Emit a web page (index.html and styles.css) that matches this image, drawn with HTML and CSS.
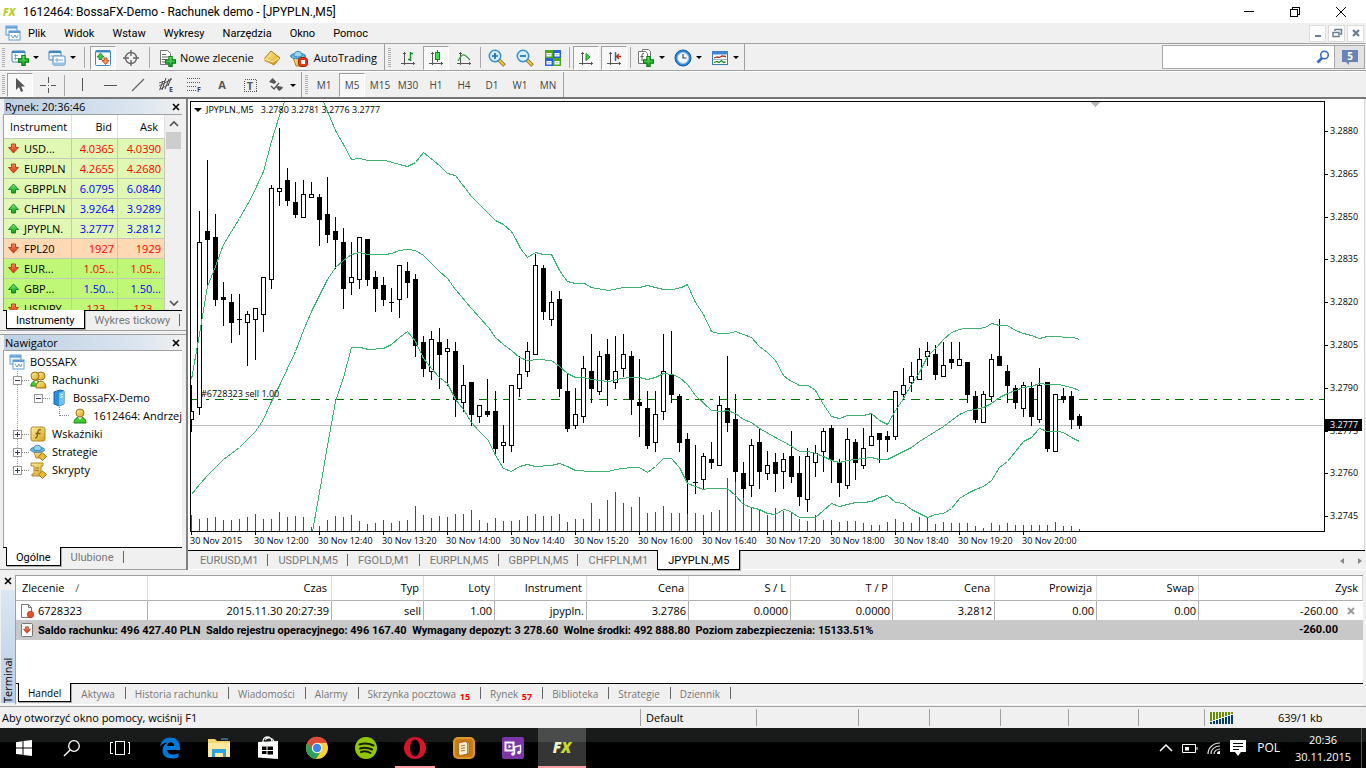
FILE: index.html
```html
<!DOCTYPE html>
<html lang="pl">
<head>
<meta charset="utf-8">
<title>1612464: BossaFX-Demo - Rachunek demo - [JPYPLN.,M5]</title>
<link rel="stylesheet" href="styles.css">
</head>
<body>
<svg class="defs" aria-hidden="true">
  <defs>
    <linearGradient id="gGreen" x1="0" y1="0" x2="0" y2="1"><stop offset="0" stop-color="#6df06d"/><stop offset="1" stop-color="#0b9a1e"/></linearGradient>
    <linearGradient id="gGold" x1="0" y1="0" x2="1" y2="1"><stop offset="0" stop-color="#fff0a0"/><stop offset="1" stop-color="#d9a31c"/></linearGradient>
    <linearGradient id="gRed" x1="0" y1="0" x2="0" y2="1"><stop offset="0" stop-color="#ff8a5c"/><stop offset="1" stop-color="#d03010"/></linearGradient>
    <symbol id="plus" viewBox="0 0 10 10"><path d="M3.500.5h3v3h3v3h-3v3h-3v-3h-3v-3h3z" fill="url(#gGreen)" stroke="#0a7d18"/></symbol>
    <symbol id="down" viewBox="0 0 11 11"><path d="M3.500 1h4v3.500h3L5.500 10 .5 4.500h3z" fill="url(#gRed)" stroke="#a83a1c" stroke-width=".9"/></symbol>
    <symbol id="up" viewBox="0 0 11 11"><path d="M3.500 10h4V6.500h3L5.500 1 .5 6.500h3z" fill="url(#gGreen)" stroke="#167a2a" stroke-width=".9"/></symbol>
    <symbol id="charts" viewBox="0 0 16 16"><rect x="1" y="1" width="11" height="9" fill="#eaf5ff" stroke="#5e9bd8"/><path d="M1 2.500h11" stroke="#5e9bd8" stroke-width="2"/><rect x="4" y="6" width="11" height="9" fill="#fff" stroke="#5e9bd8"/><path d="M4 7h11" stroke="#5e9bd8" stroke-width="2"/><path d="M6 10l2 3 2-3 1.500 3L13 10" fill="none" stroke="#5e9bd8"/></symbol>
    <symbol id="axes" viewBox="0 0 16 16"><path d="M4.500 2v13M1 13.500h14M3 3.500h3M13.500 12v3" fill="none" stroke="#555"/></symbol>
    <symbol id="hat" viewBox="0 0 18 18"><ellipse cx="8.500" cy="7.500" rx="8" ry="3" fill="#69b9de" stroke="#347fae"/><path d="M4 7c0-6 9-6 9 0-2 2-7 2-9 0z" fill="#94d5f0" stroke="#347fae"/></symbol>
    <symbol id="person" viewBox="0 0 16 16"><path d="M2 15c0-8 12-8 12 0z" fill="#42cc2c" stroke="#138018"/><path d="M6 9l2 3 2-3z" fill="#fff"/><circle cx="8" cy="5" r="4" fill="url(#gGold)" stroke="#9a7418"/></symbol>
  </defs>
</svg>

<div class="app">
  <header class="titlebar">
    <svg class="ico-title" viewBox="0 0 18 12"><text x="1" y="10" class="fx-small">FX</text></svg>
    <span class="title-text">1612464: BossaFX-Demo - Rachunek demo - [JPYPLN.,M5]</span>
    <div class="window-buttons">
      <button aria-label="Minimalizuj"><svg viewBox="0 0 12 12"><path d="M1 5.500h10" stroke="#000" shape-rendering="crispEdges"/></svg></button>
      <button aria-label="Przywróć"><svg viewBox="0 0 12 12"><path d="M1.500 3.500h7v7h-7zM3.500 3V1.500h7v7H9" fill="none" stroke="#000" shape-rendering="crispEdges"/></svg></button>
      <button aria-label="Zamknij"><svg viewBox="0 0 12 12"><path d="M1 1l10 10M11 1L1 11" stroke="#000"/></svg></button>
    </div>
  </header>

  <nav class="menubar">
    <svg class="ico16"><use href="#charts"/></svg>
    <button>Plik</button><button>Widok</button><button>Wstaw</button><button>Wykresy</button><button>Narzędzia</button><button>Okno</button><button>Pomoc</button>
    <div class="mdi-buttons">
      <button aria-label="Minimalizuj wykres"><svg viewBox="0 0 12 12"><path d="M3 9h6" stroke="#6b7f92" stroke-width="2"/></svg></button>
      <button aria-label="Przywróć wykres"><svg viewBox="0 0 12 12"><path d="M2 5.500h6v4H2zM4 4V2.500h6.500V7H9" fill="none" stroke="#6b7f92" stroke-width="1.500"/></svg></button>
      <button aria-label="Zamknij wykres"><svg viewBox="0 0 12 12"><path d="M3 3l6 6M9 3L3 9" stroke="#6b7f92" stroke-width="2.200"/></svg></button>
    </div>
  </nav>

  <div class="toolrow">
    <div class="toolbar">
      <i class="grip"></i>
      <button class="tool drop" aria-label="Nowy wykres"><svg class="ico18" viewBox="0 0 18 18"><rect x="1" y="2" width="13" height="11" rx="1" fill="#fff" stroke="#3f86c4"/><path d="M1 3h13" stroke="#3f86c4" stroke-width="2"/><path d="M4.500 5v6M3 6.500h4M3 9.500h8" stroke="#7aa7cf"/><use href="#plus" x="7" y="6" width="11" height="11"/></svg><i class="caret"></i></button>
      <button class="tool drop" aria-label="Profile"><svg class="ico18" viewBox="0 0 18 18"><rect x="1" y="2" width="12" height="9" rx="1" fill="#eaf5ff" stroke="#3f86c4"/><path d="M1 3h12" stroke="#3f86c4" stroke-width="2"/><path d="M3 7h8" stroke="#7aa7cf"/><rect x="5" y="7" width="12" height="9" rx="1" fill="#fff" stroke="#3f86c4"/><path d="M5 14.500h12" stroke="#8fc3ee" stroke-width="2"/><path d="M7 11h8M9 9v4" stroke="#7aa7cf"/></svg><i class="caret"></i></button>
      <i class="sep wide"></i>
      <button class="tool pressed" aria-label="Rynek"><svg class="ico18" viewBox="0 0 18 18"><rect x="1.500" y="1.500" width="15" height="15" rx="1" fill="#fff" stroke="#3f86c4"/><path d="M2 2.500h14" stroke="#3f86c4" stroke-width="2"/><path d="M6.500 4l3.500 4h-2v2.500H5V8H3z" fill="#3ccc3c" stroke="#117d20" stroke-width=".8"/><path d="M11.500 15.500l3.500-4h-2V9h-3v2.500H8z" fill="#ff9060" stroke="#b9320c" stroke-width=".8"/></svg></button>
      <button class="tool" aria-label="Kursor danych"><svg class="ico18" viewBox="0 0 18 18"><circle cx="9" cy="9" r="5.500" fill="none" stroke="#666" stroke-width="1.400"/><path d="M9 1v6M9 11v6M1 9h6M11 9h6" stroke="#666" stroke-width="1.400"/></svg></button>
      <i class="sep wide"></i>
      <button class="tool text order"><svg class="ico18" viewBox="0 0 18 18"><path d="M2.500 1.500h7l3 3v11h-10z" fill="#fff" stroke="#777"/><path d="M4 5.500h4M4 8h6M4 10.500h5M4 13h4" stroke="#666"/><use href="#plus" x="7" y="7" width="11" height="11"/></svg>Nowe zlecenie</button>
      <button class="tool" aria-label="MetaEditor"><svg class="ico18" viewBox="0 0 18 18"><path d="M1 10L8 2l9 7-6 7z" fill="url(#gGold)" stroke="#a8761a"/><path d="M1 10l9 3 7-4-6 7L1.500 12z" fill="#d79b25"/><path d="M1 10l9 3 6-4" fill="none" stroke="#fff3b8"/></svg></button>
      <button class="tool text auto"><svg class="ico18" viewBox="0 0 18 18"><path d="M3 8h12l-3 9H6z" fill="url(#gGold)" stroke="#b6851c"/><use href="#hat" x="0" y="0" width="17" height="17"/><rect x="8.500" y="8.500" width="9" height="9" rx="3" fill="#e03c20" stroke="#a01c0c"/><rect x="11" y="11" width="4" height="4" fill="#fff"/></svg>AutoTrading</button>
    </div>
    <div class="toolbar charting">
      <i class="grip"></i>
      <button class="tool" aria-label="Słupki"><svg class="ico16" viewBox="0 0 16 16"><use href="#axes"/><path d="M10.500 2v9M10.500 3.500H13M8 9.500h2" stroke="#178a25" stroke-width="1.400"/></svg></button>
      <button class="tool pressed" aria-label="Świece"><svg class="ico16" viewBox="0 0 16 16"><use href="#axes"/><path d="M9.500 0v12" stroke="#178a25"/><rect x="7.500" y="2.500" width="4" height="7" fill="#42dc50" stroke="#178a25"/></svg></button>
      <button class="tool" aria-label="Linia"><svg class="ico16" viewBox="0 0 16 16"><use href="#axes"/><path d="M2 11c4-8 6-8 12-1" fill="none" stroke="#3b9f47" stroke-width="1.300"/></svg></button>
      <i class="sep"></i>
      <button class="tool" aria-label="Powiększ"><svg class="ico18" viewBox="0 0 18 18"><path d="M11 11l5.500 5.500" stroke="#8d6b14" stroke-width="3.600"/><path d="M11 11l5 5" stroke="#f1c93c" stroke-width="2"/><circle cx="7" cy="7" r="5.700" fill="#d5efff" stroke="#3a8fca" stroke-width="1.500"/><path d="M4 7h6M7 4v6" stroke="#1a73ae" stroke-width="1.700"/></svg></button>
      <button class="tool" aria-label="Pomniejsz"><svg class="ico18" viewBox="0 0 18 18"><path d="M11 11l5.500 5.500" stroke="#8d6b14" stroke-width="3.600"/><path d="M11 11l5 5" stroke="#f1c93c" stroke-width="2"/><circle cx="7" cy="7" r="5.700" fill="#d5efff" stroke="#3a8fca" stroke-width="1.500"/><path d="M4 7h6" stroke="#1a73ae" stroke-width="1.700"/></svg></button>
      <button class="tool" aria-label="Okna sąsiadująco"><svg class="ico18" viewBox="0 0 18 18"><path d="M1 1h8v8H1zM9 9h8v8H9z" fill="#4ea51e"/><path d="M9 1h8v8H9zM1 9h8v8H1z" fill="#2864d4"/><path d="M2.500 4h5v3.500h-5zM10.500 4h5v3.500h-5zM2.500 12h5v3.500h-5zM10.500 12h5v3.500h-5z" fill="#fff"/><path d="M3.500 5.700h3M11.500 5.700h3M3.500 13.700h3M11.500 13.700h3" stroke="#9bbcdc"/></svg></button>
      <i class="sep"></i>
      <button class="tool pressed" aria-label="Auto przewijanie"><svg class="ico16" viewBox="0 0 16 16"><use href="#axes"/><path d="M8 3.500v7l4-3.500z" fill="#42dc50" stroke="#178a25"/></svg></button>
      <button class="tool pressed" aria-label="Przesunięcie wykresu"><svg class="ico16" viewBox="0 0 16 16"><use href="#axes"/><path d="M9.500 2v9" stroke="#246ca8" stroke-width="1.500"/><path d="M15 6.500h-4M13 4l-2.500 2.500L13 9" fill="none" stroke="#b5340f" stroke-width="1.400"/></svg></button>
      <i class="sep"></i>
      <button class="tool drop" aria-label="Wskaźniki"><svg class="ico18" viewBox="0 0 18 18"><path d="M5.500.5h6l2 2v10h-8z" fill="#f8f8f8" stroke="#777"/><path d="M1.500 2.500h7l2 2v10h-9z" fill="#fff" stroke="#777"/><path d="M7 4.500c-2-.5-2 1-2 2V12M3.500 7.500h3" fill="none" stroke="#555"/><use href="#plus" x="6" y="7" width="11" height="11"/></svg><i class="caret"></i></button>
      <button class="tool drop" aria-label="Okresy"><svg class="ico18" viewBox="0 0 18 18"><circle cx="9" cy="9" r="8" fill="#2b8ae0" stroke="#155aa0"/><circle cx="9" cy="9" r="5.500" fill="#f3f9ff" stroke="#9bc5ec"/><path d="M9 5v4h3.500" fill="none" stroke="#444" stroke-width="1.200"/></svg><i class="caret"></i></button>
      <button class="tool drop" aria-label="Szablony"><svg class="ico18" viewBox="0 0 18 18"><rect x="1.500" y="2.500" width="15" height="13" fill="#fff" stroke="#3f78b4"/><path d="M1 4h16" stroke="#3f86d4" stroke-width="3"/><path d="M3 9l3-1 2 .5L11 7l4 .5" fill="none" stroke="#a83a1c" stroke-width="1.300"/><path d="M2 10.500h14" stroke="#9bbcdc"/><path d="M3 13.500l3-1 2 1 2.500-2 2 2 2-.500" fill="none" stroke="#178a25" stroke-width="1.300"/></svg><i class="caret"></i></button>
    </div>
    <form class="search">
      <input type="text" aria-label="Szukaj">
      <svg class="ico14" viewBox="0 0 14 14"><path d="M6 8l-4.500 4.500" stroke="#3567c8" stroke-width="2.600"/><circle cx="8.500" cy="5" r="3.800" fill="#fff" stroke="#3567c8" stroke-width="1.500"/></svg>
      <button type="button" aria-label="Wiadomości: 5"><svg viewBox="0 0 18 18"><path d="M1 2h16v12H8v3l-3-3H1z" fill="#6b82b4"/><text x="9" y="12" text-anchor="middle" class="chat-num">5</text></svg></button>
    </form>
  </div>

  <div class="toolrow lower">
    <div class="toolbar">
      <i class="grip"></i>
      <button class="tool pressed" aria-label="Kursor"><svg class="ico16" viewBox="0 0 16 16"><path d="M4 1v12l3-3 2 5 2.200-1-2-4.500H13z" fill="#555"/></svg></button>
      <button class="tool" aria-label="Celownik"><svg class="ico16" viewBox="0 0 16 16"><path d="M8.500 0v6M8.500 11v5M0 8.500h6M11 8.500h5M8 8.500h1" stroke="#555" shape-rendering="crispEdges"/></svg></button>
      <i class="sep"></i>
      <button class="tool" aria-label="Linia pionowa"><svg class="ico16" viewBox="0 0 16 16"><path d="M8.500 1v13" stroke="#555" shape-rendering="crispEdges"/></svg></button>
      <button class="tool" aria-label="Linia pozioma"><svg class="ico16" viewBox="0 0 16 16"><path d="M2 8.500h13" stroke="#555" shape-rendering="crispEdges"/></svg></button>
      <button class="tool" aria-label="Linia trendu"><svg class="ico16" viewBox="0 0 16 16"><path d="M2 14L14 2" stroke="#666" stroke-width="1.200"/></svg></button>
      <button class="tool" aria-label="Kanał"><svg class="ico16" viewBox="0 0 16 16"><path d="M1 9L14 2M1 13L11 7M1 6l6-2" stroke="#666"/><path d="M4 13L8 1M7 12l4-10M2 12l3-8M10 9l3-8" stroke="#444"/><text x="11" y="15" class="glyph-sub">E</text></svg></button>
      <button class="tool" aria-label="Fibonacci"><svg class="ico16" viewBox="0 0 16 16"><path d="M1 1.500h14M1 5.500h14M1 9.500h9M1 13.500h9" stroke="#555" stroke-dasharray="1 1"/><text x="11" y="15" class="glyph-sub">F</text></svg></button>
      <button class="tool glyph">A</button>
      <button class="tool" aria-label="Etykieta"><svg class="ico16" viewBox="0 0 16 16"><path d="M2.500 2.500h12v12h-12z" fill="none" stroke="#555" stroke-dasharray="1 1" shape-rendering="crispEdges"/><text x="8" y="13" text-anchor="middle" class="glyph-t">T</text></svg></button>
      <button class="tool drop narrow" aria-label="Strzałki"><svg class="ico16" viewBox="0 0 16 16"><path d="M4.500 1l4 4-2.500 2-2-1-3-1zM11 14l-3-4 2-1 5 1-1 2z" fill="#555"/><path d="M3 9l3 3 5-6" fill="none" stroke="#555" stroke-width="1.300"/></svg><i class="caret"></i></button>
    </div>
    <div class="toolbar periods">
      <i class="grip"></i>
      <button class="tool">M1</button><button class="tool pressed">M5</button><button class="tool">M15</button><button class="tool">M30</button><button class="tool">H1</button><button class="tool">H4</button><button class="tool">D1</button><button class="tool">W1</button><button class="tool">MN</button>
    </div>
  </div>

  <main class="workspace">
    <aside class="side">
      <section class="panel market">
        <div class="panel-title"><span>Rynek: 20:36:46</span><button aria-label="Zamknij Rynek"><svg viewBox="0 0 8 8"><path d="M1 1l6 6M7 1L1 7" stroke="#000" stroke-width="1.600"/></svg></button></div>
        <div class="quotes">
          <div class="quote-clip">
          <table>
            <colgroup><col class="q-name"><col class="q-bid"><col></colgroup>
            <thead><tr><th>Instrument</th><th>Bid</th><th>Ask</th></tr></thead>
            <tbody>
              <tr class="dn"><td><svg><use href="#down"/></svg>USD...</td><td>4.0365</td><td>4.0390</td></tr>
              <tr class="dn"><td><svg><use href="#down"/></svg>EURPLN</td><td>4.2655</td><td>4.2680</td></tr>
              <tr class="upw"><td><svg><use href="#up"/></svg>GBPPLN</td><td>6.0795</td><td>6.0840</td></tr>
              <tr class="upw"><td><svg><use href="#up"/></svg>CHFPLN</td><td>3.9264</td><td>3.9289</td></tr>
              <tr class="upw"><td><svg><use href="#up"/></svg>JPYPLN.</td><td>3.2777</td><td>3.2812</td></tr>
              <tr class="dn index"><td><svg><use href="#down"/></svg>FPL20</td><td>1927</td><td>1929</td></tr>
              <tr class="dn major"><td><svg><use href="#down"/></svg>EUR...</td><td>1.05...</td><td>1.05...</td></tr>
              <tr class="upw major"><td><svg><use href="#up"/></svg>GBP...</td><td>1.50...</td><td>1.50...</td></tr>
              <tr class="dn major"><td><svg><use href="#down"/></svg>USDJPY</td><td>123...</td><td>123...</td></tr>
            </tbody>
          </table>
          </div>
          <div class="scrollbar">
            <svg viewBox="0 0 10 6"><path d="M1 5l4-4 4 4" fill="none" stroke="#505050" stroke-width="1.600"/></svg>
            <i class="thumb"></i>
            <svg viewBox="0 0 10 6"><path d="M1 1l4 4 4-4" fill="none" stroke="#505050" stroke-width="1.600"/></svg>
          </div>
        </div>
        <div class="tabs small"><button class="active">Instrumenty</button><button>Wykres tickowy</button></div>
      </section>

      <section class="panel navigator">
        <div class="panel-title"><span>Nawigator</span><button aria-label="Zamknij Nawigator"><svg viewBox="0 0 8 8"><path d="M1 1l6 6M7 1L1 7" stroke="#000" stroke-width="1.600"/></svg></button></div>
        <ul class="tree">
          <li class="root"><svg class="ico16"><use href="#charts"/></svg>BOSSAFX</li>
          <li class="lvl1"><i class="toggle minus"></i><i class="dots"></i><svg class="ico18" viewBox="0 0 18 18"><use href="#person" x="0" y="1" width="14" height="16"/><circle cx="12" cy="5" r="4" fill="url(#gGold)" stroke="#9a7418"/><path d="M7 17c0-9 10-9 10 0z" fill="url(#gGold)" stroke="#9a7418"/><circle cx="6" cy="5" r="4" fill="url(#gGold)" stroke="#9a7418"/></svg>Rachunki</li>
          <li class="lvl2"><i class="toggle minus"></i><i class="dots"></i><svg class="ico18" viewBox="0 0 18 18"><path d="M4 3l6-2 4 1v13l-5 2-5-2z" fill="#2a8fdb" stroke="#1763a8"/><path d="M9 4l5-2v13l-5 2z" fill="#6fc2f8"/><path d="M10.500 6l2.500-1M10.500 8.500l2.500-1" stroke="#fff"/></svg>BossaFX-Demo</li>
          <li class="lvl3"><i class="dots"></i><svg class="ico16"><use href="#person"/></svg>1612464: Andrzej</li>
          <li class="lvl1"><i class="toggle plus"></i><i class="dots"></i><svg class="ico18" viewBox="0 0 18 18"><rect x="2" y="2" width="14" height="14" rx="2" fill="url(#gGold)" stroke="#b08a2c"/><path d="M12 5c-3-1-3 1-3.500 4S8 13 6 13M6.500 8.500h5" fill="none" stroke="#7c5c12" stroke-width="1.300"/></svg>Wskaźniki</li>
          <li class="lvl1"><i class="toggle plus"></i><i class="dots"></i><svg class="ico18" viewBox="0 0 18 18"><path d="M5 9h8l-2 6H7z" fill="url(#gGold)" stroke="#b08a2c"/><use href="#hat" x="1" y="0" width="16" height="16"/><path d="M13.500 10l4 3.500-4 4-4-4z" fill="#e8bc3c" stroke="#a8761a"/></svg>Strategie</li>
          <li class="lvl1"><i class="toggle plus"></i><i class="dots"></i><svg class="ico18" viewBox="0 0 18 18"><path d="M2 2h12v3h-2v8h2v2H3v-2h2V5H2z" fill="url(#gGold)" stroke="#b08a2c"/><path d="M6 7h4M6 9.500h4" stroke="#9a7418"/><path d="M13.500 10l4 3.500-4 4-4-4z" fill="#e8bc3c" stroke="#a8761a"/></svg>Skrypty</li>
        </ul>
        <div class="tabs small"><button class="active">Ogólne</button><button>Ulubione</button></div>
      </section>
    </aside>

    <section class="chart-window">
      <div class="chart">
        <div class="plot">
          <svg id="plot" role="img" aria-label="Wykres JPYPLN.,M5"></svg>
          <div class="plot-caption"><svg viewBox="0 0 8 4"><path d="M0 0h8L4 4z"/></svg><span>JPYPLN.,M5&nbsp;&nbsp; 3.2780 3.2781 3.2776 3.2777</span></div>
        </div>
        <svg id="prices" class="price-axis"></svg>
        <ol class="time-axis">
          <li>30 Nov 2015</li><li>30 Nov 12:00</li><li>30 Nov 12:40</li><li>30 Nov 13:20</li><li>30 Nov 14:00</li><li>30 Nov 14:40</li><li>30 Nov 15:20</li><li>30 Nov 16:00</li><li>30 Nov 16:40</li><li>30 Nov 17:20</li><li>30 Nov 18:00</li><li>30 Nov 18:40</li><li>30 Nov 19:20</li><li>30 Nov 20:00</li>
        </ol>
      </div>
      <div class="tabs chart-tabs">
        <button>EURUSD,M1</button><button>USDPLN,M5</button><button>FGOLD,M1</button><button>EURPLN,M5</button><button>GBPPLN,M5</button><button>CHFPLN,M1</button><button class="active">JPYPLN.,M5</button>
        <svg class="tab-scroll" viewBox="0 0 24 8"><path d="M5 1v6L1 4zM19 1v6l4-3z" fill="#888"/></svg>
      </div>
    </section>
  </main>

  <section class="terminal">
    <div class="terminal-side"><button aria-label="Zamknij Terminal"><svg viewBox="0 0 8 8"><path d="M1 1l6 6M7 1L1 7" stroke="#000" stroke-width="1.600"/></svg></button><span>Terminal</span></div>
    <div class="terminal-main">
      <table class="orders">
        <colgroup><col class="w132"><col class="w184"><col class="w92"><col class="w71"><col class="w92"><col class="w102"><col class="w102"><col class="w102"><col class="w102"><col class="w102"><col class="w102"><col></colgroup>
        <thead><tr><th>Zlecenie <span class="sort">∕</span></th><th>Czas</th><th>Typ</th><th>Loty</th><th>Instrument</th><th>Cena</th><th>S / L</th><th>T / P</th><th>Cena</th><th>Prowizja</th><th>Swap</th><th>Zysk</th></tr></thead>
        <tbody>
          <tr><td><svg class="ico16" viewBox="0 0 16 16"><path d="M2.500 1.500h7l3 3v10h-10z" fill="#fff" stroke="#777"/><path d="M9.500 1.500v3h3" fill="none" stroke="#777"/><circle cx="11.500" cy="11.500" r="3.200" fill="#e8502c" stroke="#a83a1c" stroke-width=".8"/></svg>6728323</td><td>2015.11.30 20:27:39</td><td>sell</td><td>1.00</td><td>jpypln.</td><td>3.2786</td><td>0.0000</td><td>0.0000</td><td>3.2812</td><td>0.00</td><td>0.00</td><td>-260.00<button aria-label="Zamknij zlecenie"><svg viewBox="0 0 8 8"><path d="M1 1l6 6M7 1L1 7" stroke="#999" stroke-width="1.800"/></svg></button></td></tr>
          <tr class="balance"><td colspan="11"><svg class="ico16" viewBox="0 0 16 16"><rect x="2.500" y="1.500" width="11" height="13" rx="1" fill="#fff" stroke="#777"/><use href="#down" x="4" y="4" width="8" height="8"/></svg>Saldo rachunku: 496 427.40 PLN&nbsp; Saldo rejestru operacyjnego: 496 167.40&nbsp; Wymagany depozyt: 3 278.60&nbsp; Wolne środki: 492 888.80&nbsp; Poziom zabezpieczenia: 15133.51%</td><td>-260.00</td></tr>
        </tbody>
      </table>
      <div class="tabs terminal-tabs">
        <button class="active">Handel</button><button>Aktywa</button><button>Historia rachunku</button><button>Wiadomości</button><button>Alarmy</button><button>Skrzynka pocztowa <b>15</b></button><button>Rynek <b>57</b></button><button>Biblioteka</button><button>Strategie</button><button>Dziennik</button>
      </div>
    </div>
  </section>

  <footer class="statusbar">
    <span class="hint">Aby otworzyć okno pomocy, wciśnij F1</span>
    <span class="s116">Default</span><span class="s102"></span><span class="s71"></span><span class="s71"></span><span class="s68"></span><span class="s70"></span><span class="s66"></span>
    <span class="net"><svg id="signal" viewBox="0 0 24 12"><path d="M1 0v9M4 0v8M7 0v7M10 0v6M13 0v5M16 0v4M19 0v3M22 0v2" stroke="#6b8e00" stroke-width="2"/><path d="M1 10v2M4 9v3M7 8v4M10 7v5M13 6v6M16 5v7M19 4v8M22 3v9" stroke="#003f6b" stroke-width="2"/></svg>639/1 kb</span>
  </footer>

  <div class="taskbar">
    <button aria-label="Start"><svg viewBox="0 0 24 24"><path d="M4 6.300l6.500-1v6.300H4zM11.500 5.100L20 4v7.600h-8.500zM4 12.600h6.500v6.200L4 17.900zM11.500 12.600H20V20l-8.500-1.100z" fill="#fff"/></svg></button>
    <button aria-label="Szukaj"><svg viewBox="0 0 24 24"><circle cx="14" cy="10" r="5.300" fill="none" stroke="#fff" stroke-width="1.300"/><path d="M10 14l-6 6" stroke="#fff" stroke-width="1.400"/></svg></button>
    <button class="wide" aria-label="Widok zadań"><svg viewBox="0 0 24 24"><path d="M7.500 5.500h9v13h-9zM4.500 6.500h-2v11h2M19.500 6.500h2v11h-2" fill="none" stroke="#fff" shape-rendering="crispEdges"/></svg></button>
    <button aria-label="Edge"><svg viewBox="0 0 24 24"><path d="M2 10.500C3 4.500 7.500 1.500 12 1.500c6 0 10 4 10 10v2.500H9c.3 3 3 4.500 6 4.500 2 0 4-.5 5.500-1.500v4c-2 1-4 1.500-6.500 1.500C8 22.500 4.500 19 4.500 14.500c0-3.500 2-6.500 5-8C6 6.500 3.500 8.500 2 10.500zM9.200 10H16c0-2-1-3.700-3.300-3.700-2 0-3.200 1.700-3.500 3.700z" fill="#0078d7"/></svg></button>
    <button aria-label="Eksplorator plików"><svg viewBox="0 0 24 24"><path d="M1 3h7l2 2h13v16H1z" fill="#f6d56c"/><path d="M1 7h22v14H1z" fill="#fde9a0"/><path d="M5 21v-8h14v8h-3v-4H8v4z" fill="#2ea3e0"/><path d="M14 3h7" stroke="#49b4ee"/></svg></button>
    <button aria-label="Sklep"><svg viewBox="0 0 24 24"><path d="M2 6l20-1v18L2 21.500z" fill="#fff"/><path d="M7 7C6-1 16-1 16 6M9 4c2-3 8-3 9 2" fill="none" stroke="#fff" stroke-width="1.200"/><path d="M6 10.500h4.500v3.500H6zM11.500 10.500H17V14h-5.500zM6 15h4.500v3H6zM11.500 15H17v3.500h-5.500z" fill="#000"/></svg></button>
    <button aria-label="Chrome"><svg viewBox="0 0 24 24"><circle cx="12" cy="12" r="11" fill="#f9cf3a"/><path d="M2.500 6.500A11 11 0 0 1 22 7H12l-5 8z" fill="#de4b3b"/><path d="M2.500 6.500A11 11 0 0 0 11 23l5.500-8.500L7 14z" fill="#2ca05a"/><circle cx="12" cy="12" r="5.200" fill="#fff"/><circle cx="12" cy="12" r="4.200" fill="#4285e8"/></svg></button>
    <button aria-label="Spotify"><svg viewBox="0 0 24 24"><circle cx="12" cy="12" r="11" fill="#92c800"/><path d="M5.500 8.500c5-1.500 10-1 14 1M6 12.500c4-1.300 8.500-.8 12 1M7 16c3-1 7-.5 9.500 1" fill="none" stroke="#1a1a1a" stroke-width="2" stroke-linecap="round"/></svg></button>
    <button class="open" aria-label="Opera"><svg viewBox="0 0 24 24"><circle cx="12" cy="12" r="11" fill="#d8142c"/><ellipse cx="12" cy="12" rx="5" ry="8.500" fill="#000"/></svg></button>
    <button aria-label="Książki"><svg viewBox="0 0 24 24"><rect x="1" y="1" width="22" height="22" rx="5" fill="#e0982c"/><rect x="3" y="3" width="18" height="18" rx="3" fill="#c87a12"/><path d="M9 5.500l8 1v11l-2 .5" fill="#e8d3a0" stroke="#8d5710" stroke-width=".7"/><path d="M6.500 7l7-1.500 2 1.500v11l-7 1.500-2-1.500z" fill="#f7ecd0" stroke="#8d5710" stroke-width=".7"/><path d="M9 10l4-.8M9 12.500l4-.8M9 15l4-.8" stroke="#8d5710" stroke-width=".8"/></svg></button>
    <button class="wide" aria-label="Multimedia"><svg viewBox="0 0 24 24"><rect x="1" y="1" width="22" height="22" rx="2" fill="#7d36a8"/><rect x="4.500" y="6.500" width="8" height="8" fill="none" stroke="#fff" stroke-width="2"/><path d="M7.500 8.500v4l3-2z" fill="#fff"/><path d="M13.500 18v-7l6-1.500V16" fill="none" stroke="#fff" stroke-width="1.400"/><circle cx="12" cy="18" r="1.800" fill="#fff"/><circle cx="18" cy="16.500" r="1.800" fill="#fff"/></svg></button>
    <button class="open current" aria-label="BossaFX"><svg viewBox="0 0 24 24"><text x="12" y="17" text-anchor="middle" class="fx-logo"><tspan class="fx-f">F</tspan>X</text></svg></button>
    <div class="tray">
      <svg viewBox="0 0 16 16"><path d="M2 11l6-6 6 6" fill="none" stroke="#fff" stroke-width="1.500"/></svg>
      <svg viewBox="0 0 16 16"><path d="M.5 4.500h13v8H.5zM15 7v3" fill="none" stroke="#fff"/><path d="M3 7h4v3.500H3z" fill="#fff"/></svg>
      <svg viewBox="0 0 16 16"><path d="M2 14C2 8 7 3 14 3M5 14c0-5 4-8 9-8M8 14c0-3 3-5 6-5" fill="none" stroke="#ddd" stroke-width="1.200"/><path d="M11 14c0-2 1-3 3-3v3z" fill="#fff"/></svg>
      <svg class="msg" viewBox="0 0 16 16"><path d="M0 0h16v12h-5l-3 4-3-4H0z" fill="#fff"/><path d="M3 3.500h10M3 6.500h10M3 9.500h6" stroke="#000"/></svg>
      <span class="lang">POL</span>
      <time class="clock"><span>20:36</span><span>30.11.2015</span></time>
      <i class="peek"></i>
    </div>
  </div>
</div>
<script src="chart.js"></script>
</body>
</html>
```
FILE: styles.css
```css
* { box-sizing: border-box; }
html, body { height: 100%; }
body { margin: 0; font: 11px/14px "Open Sans", "Noto Sans", sans-serif; color: #000; background: #f0f0f0; overflow: hidden; }
button { font: inherit; color: inherit; background: none; border: 0; padding: 0; margin: 0; }
svg { display: block; flex: none; overflow: visible; }
ul, ol { list-style: none; margin: 0; padding: 0; }
i { font-style: normal; }
table { border-collapse: separate; border-spacing: 0; table-layout: fixed; width: 100%; }
.defs { position: absolute; width: 0; height: 0; }
.ico14 { width: 14px; height: 14px; }
.ico16 { width: 16px; height: 16px; }
.ico18 { width: 18px; height: 18px; }
.app { display: flex; flex-direction: column; height: 100vh; }

/* Title bar */
.titlebar { display: flex; align-items: center; height: 23px; background: #fff; font: 12px/22px Roboto, sans-serif; }
.ico-title { width: 18px; height: 12px; margin: 0 3px 0 2px; }
.fx-small { font: italic 800 10px/12px "Open Sans", sans-serif; fill: #b9cf2a; }
.window-buttons { display: flex; margin-left: auto; }
.window-buttons button { width: 46px; height: 22px; display: flex; align-items: center; justify-content: center; }
.window-buttons svg { width: 12px; height: 12px; }
.window-buttons button:last-child { margin-right: 2px; }

/* Menu */
.menubar { display: flex; align-items: center; height: 21px; border-bottom: 1px solid #a0a0a0; padding-left: 5px; font-family: Roboto, sans-serif; }
.menubar > button { margin-left: 18px; padding-top: 2px; }
.menubar > svg { margin-right: -11px; }
.mdi-buttons { display: flex; gap: 2px; margin-left: auto; padding-right: 2px; }
.mdi-buttons button { width: 17px; height: 17px; background: #fdfdfd; border: 1px solid #dcdcdc; display: flex; align-items: center; justify-content: center; }
.mdi-buttons svg { width: 12px; height: 12px; }

/* Toolbars */
.toolrow { display: flex; height: 27px; border-bottom: 1px solid #a0a0a0; }
.toolrow.lower { height: 28px; border-top: 1px solid #fff; border-bottom: 2px solid #777; }
.toolbar { display: flex; align-items: center; padding: 1px 3px 0 2px; border-right: 1px solid #a0a0a0; }
.toolbar.charting { padding-right: 0; }
.toolbar.charting .grip { margin-left: 1px; margin-right: 3px; }
.toolbar.periods .grip { margin-left: 1px; margin-right: 2px; }
.lower .toolbar { padding-right: 2px; }
.lower .periods { padding-right: 1px; }
.grip { width: 3px; height: 20px; margin-right: 1px; background: repeating-linear-gradient(#b0b0b0 0 1px, #f0f0f0 1px 2px); }
.sep { width: 5px; height: 21px; background: linear-gradient(#a8a8a8, #a8a8a8) 2px 0 / 1px 100% no-repeat; }
.lower .sep { width: 6px; }
.sep.wide { width: 9px; background-position: 4px 0; }
.tool { width: 28px; height: 24px; display: flex; align-items: center; justify-content: center; }
.tool.pressed { width: 26px; margin: 0 1px; background: #f8f8f8; border: 1px solid #fff; border-top-color: #a0a0a0; border-left-color: #a0a0a0; }
.tool.drop { width: 37px; gap: 4px; }
.tool.drop.narrow { width: 35px; gap: 6px; }
.tool.text { width: auto; gap: 4px; padding: 0 4px; }
.tool.auto { gap: 6px; }
.caret { width: 5px; border: 3px solid transparent; border-top-color: #000; border-bottom: 0; }
.periods .tool { color: #444; font-size: 10px; }
.glyph { color: #555; font-weight: 700; }
.glyph-sub { font: 700 7px/8px "Open Sans", sans-serif; fill: #444; }
.glyph-t { font: 700 11px/12px "Open Sans", sans-serif; fill: #555; }
.search { display: flex; align-items: center; margin: 1px 1px 1px auto; height: 24px; background: #fff; border: 1px solid #a8a8a8; }
.search input { width: 153px; border: 0; outline: 0; background: none; padding: 0 4px; font: inherit; }
.search > svg { margin-right: 4px; }
.search button { width: 30px; height: 22px; border-left: 1px solid #a8a8a8; background: #e3e3e3; display: flex; align-items: center; justify-content: center; }
.search button svg { width: 18px; height: 18px; }
.chat-num { font: 700 10px/12px "Open Sans", sans-serif; fill: #fff; }

/* Side panels */
.workspace { display: flex; flex: 1; min-height: 0; }
.side { width: 188px; display: flex; flex-direction: column; border-right: 2px solid #808080; }
.panel { display: flex; flex-direction: column; padding: 0 4px 0 3px; border-bottom: 1px solid #a0a0a0; }
.market { height: 232px; }
.navigator { flex: 1; margin-top: 3px; padding-bottom: 2px; border-top: 1px solid #a0a0a0; min-height: 0; }
.panel-title { display: flex; align-items: center; justify-content: space-between; height: 15px; margin: 0 0 0 1px; padding: 0 2px 0 1px; background: linear-gradient(90deg, #bccfe2, #dbe5f0 75%, #f0f0f0); }
.panel-title svg { width: 8px; height: 8px; }
.quotes { flex: 1; display: flex; min-height: 0; border: 1px solid #a0a0a0; border-right: 0; border-bottom: 0; background: #fff; }
.quote-clip { flex: 1; overflow: hidden; }
.q-name { width: 68px; }
.q-bid { width: 46px; }
.quotes th { height: 24px; padding: 0 6px; font-weight: 400; text-align: right; border-right: 1px solid #e0e0e0; border-bottom: 1px solid #c8c8c8; }
.quotes th:nth-child(2) { padding-right: 5px; }
.quotes th:first-child { text-align: left; padding-right: 0; }
.quotes td { height: 20px; padding: 0 3px; text-align: right; white-space: nowrap; background: #e0f8b4; border-right: 1px solid #c4c8bc; border-bottom: 1px solid #c4c8bc; }
.quotes td:first-child { text-align: left; padding-left: 4px; color: #000; }
.quotes td svg { display: inline-block; width: 11px; height: 11px; margin-right: 5px; vertical-align: -1px; }
.quotes .index td { background: #ffd8b4; }
.quotes .major td { background: #bef876; }
.dn td { color: #f00; }
.upw td { color: #00f; }
.scrollbar { width: 17px; background: #f0f0f0; display: flex; flex-direction: column; align-items: center; padding: 6px 0 4px; }
.scrollbar svg { width: 10px; height: 6px; }
.thumb { width: 15px; height: 17px; margin: 5px 0 auto; background: #cdcdcd; }

/* Tabs */
.tabs { display: flex; height: 20px; border-top: 1px solid #000; color: #777; flex: none; font-family: Roboto, sans-serif; }
.tabs button { position: relative; padding: 0 11px 0 9px; height: 18px; line-height: 20px; white-space: nowrap; }
.tabs button:not(.active)::after { content: ""; position: absolute; right: 0; top: 3px; height: 12px; border-right: 1px solid #666; }
.tabs .active { padding: 0 9px; color: #000; background: #fff; border: 1px solid #000; border-top: 0; margin-top: -1px; height: 19px; line-height: 21px; box-shadow: 1px 1px 0 #aaa; }
.tabs.small .active { margin-left: 3px; }
.tabs.small button:not(.active) { padding: 0 10px; }
.tabs b { color: #f00; font-size: 9px; vertical-align: -2px; margin-left: 1px; }

/* Navigator tree */
.tree { flex: 1; padding: 2px 0 0 5px; background: #fff; border: 1px solid #a0a0a0; border-right: 0; border-bottom: 0; overflow: hidden; }
.tree li { display: flex; align-items: center; height: 18px; white-space: nowrap; }
.tree li > svg { margin-right: 5px; }
.tree .lvl1 { padding-left: 4px; background: repeating-linear-gradient(#999 0 1px, transparent 1px 2px) 8px 0 / 1px 100% no-repeat; }
.tree .lvl2 { padding-left: 25px; background: repeating-linear-gradient(#999 0 1px, transparent 1px 2px) 8px 0 / 1px 100% no-repeat; }
.tree .lvl3 { padding-left: 50px; background: repeating-linear-gradient(#999 0 1px, transparent 1px 2px) 8px 0 / 1px 100% no-repeat; }
.tree .lvl1:last-child { background-size: 1px 9px; }
.toggle { width: 9px; height: 9px; border: 1px solid #999; background: linear-gradient(#336, #336) center / 5px 1px no-repeat, #fff; }
.toggle.plus { background: linear-gradient(#336, #336) center / 5px 1px no-repeat, linear-gradient(#336, #336) center / 1px 5px no-repeat, #fff; }
.dots { width: 7px; border-top: 1px dotted #888; }
.lvl3 .dots { width: 12px; margin-right: 3px; height: 9px; border-left: 1px dotted #888; border-top: 0; border-bottom: 1px dotted #888; margin-top: -9px; }

/* Chart window */
.chart-window { flex: 1; display: flex; flex-direction: column; min-width: 0; margin-right: 1px; }
.chart { flex: 1; display: grid; grid-template: 1fr 18px / 1fr 39px; background: #fff; padding: 2px 0 0 2px; min-height: 0; border-right: 1px solid #d8d8d8; }
.plot { position: relative; border: 1px solid #000; min-height: 0; }
#plot { position: absolute; inset: 0; width: 100%; height: 100%; overflow: hidden; }
.plot-caption { position: absolute; left: 3px; top: 1px; display: flex; align-items: center; gap: 4px; font-size: 9px; line-height: 14px; }
.plot-caption svg { width: 8px; height: 4px; }
.price-axis { width: 100%; height: 100%; }
.price-axis text, .plot text { font: 9px/12px "Open Sans", sans-serif; }
.time-axis { display: flex; font-size: 9px; line-height: 14px; }
.time-axis li { width: 64px; flex: none; white-space: nowrap; background: linear-gradient(#000, #000) 1px 0 / 1px 3px no-repeat; padding-top: 2px; }
.chart-tabs { padding-left: 2px; border-bottom: 1px solid #fff; }
.chart-tabs button { padding: 0 10px; }
.chart-tabs .active { padding: 0 10px; height: 20px; margin-left: -1px; }
.tab-scroll { width: 24px; height: 8px; margin: 6px 2px 0 auto; }

/* Terminal */
.terminal { display: flex; height: 133px; margin-top: 3px; }
.terminal-side { width: 15px; display: flex; flex-direction: column; align-items: center; justify-content: space-between; padding: 4px 0 3px 1px; }
.terminal-side button svg { width: 8px; height: 8px; }
.terminal-side span { writing-mode: vertical-rl; transform: rotate(180deg); width: 14px; flex: 1; margin-top: 5px; line-height: 14px; text-align: left; background: linear-gradient(#b9cde2, #dbe7f3); }
.terminal-main { flex: 1; display: flex; flex-direction: column; justify-content: space-between; margin: 2px 3px 1px 0; background: #fff; border: 1px solid #a0a0a0; border-right: 0; border-bottom: 1px solid #fff; }
.w132 { width: 132px; } .w184 { width: 184px; } .w92 { width: 92px; } .w71 { width: 71px; } .w102 { width: 102px; }
.orders th { height: 25px; padding: 0 4px 0 6px; font-weight: 400; text-align: right; border-right: 1px solid #ddd; border-bottom: 1px solid #b0b0b0; }
.orders th:first-child, .orders td:first-child { text-align: left; }
.orders .sort { margin-left: 8px; color: #555; }
.orders td { height: 19px; padding: 0 2px 0 3px; text-align: right; border-right: 1px solid #b0b0b0; white-space: nowrap; }
.orders td svg { display: inline-block; vertical-align: -4px; }
.orders td .ico16 { margin-right: 3px; }
.orders td:last-child { border-right: 0; padding-right: 25px; position: relative; }
.orders td button { position: absolute; right: 8px; top: 3px; }
.orders td button svg { width: 8px; height: 8px; vertical-align: 0; }
.orders .balance td { height: 20px; background: #c8c8c8; border: 0; font-family: Roboto, sans-serif; font-weight: 700; }
.terminal-tabs { background: #f0f0f0; height: 21px; padding-left: 2px; font-family: "Open Sans", sans-serif; font-size: 10px; }
.terminal-tabs .active { margin-right: 1px; }

/* Status bar */
.statusbar { display: flex; height: 22px; border-top: 1px solid #a0a0a0; align-items: center; }
.statusbar span { height: 17px; line-height: 18px; padding-left: 5px; border-left: 1px solid #a0a0a0; }
.statusbar .hint { flex: 1; border: 0; padding-left: 2px; }
.s116 { width: 116px; } .s102 { width: 102px; } .s71 { width: 71px; } .s68 { width: 68px; } .s70 { width: 70px; } .s66 { width: 66px; }
.statusbar .net { width: 162px; display: flex; align-items: center; gap: 44px; }
#signal { width: 24px; height: 12px; shape-rendering: crispEdges; }

/* Taskbar */
.taskbar { display: flex; height: 40px; background: linear-gradient(#191b1b 14px, #000 14px); color: #fff; flex: none; }
.taskbar > button { width: 48px; height: 40px; margin-right: 1px; display: flex; align-items: center; justify-content: center; }
.taskbar > button:nth-child(-n+2) { margin-right: 0; }
.taskbar > button.wide { margin-right: 2px; }
.taskbar > button.wide:nth-child(11) { margin-right: 1px; }
.taskbar > button > svg { width: 24px; height: 24px; }
.taskbar .open { background: linear-gradient(#ff9fa4, #ff9fa4) center bottom / 40px 2px no-repeat; }
.taskbar .current { background: linear-gradient(#ff9fa4, #ff9fa4) center bottom / 100% 2px no-repeat, linear-gradient(#4a4b4b 14px, #353535 14px); }
.fx-logo { font: italic 800 15px/16px "Open Sans", sans-serif; fill: #c6d92a; }
.fx-f { fill: #eef4c0; }
.tray { display: flex; align-items: center; margin-left: auto; gap: 8px; }
.tray svg { width: 16px; height: 16px; }
.lang { font-size: 12px; margin: 0 5px 0 3px; }
.clock { display: flex; flex-direction: column; align-items: center; font-size: 11px; line-height: 17px; width: 60px; }
.peek { width: 5px; height: 40px; border-left: 1px solid #555; }
```
FILE: chart.js
```js
// Candles: [high, body top, body bottom, low, kind, volume top]; 1 = falling, 0 = rising, 2 = doji.
const candles = [
[385,411,420,432,0,515],[211,242,408,415,0,519],[160,231,240,285,1,518],[214,237,300,306,1,517],[282,297,300,326,1,520],[294,302,323,343,1,520],[294,319,320,335,2,519],[311,314,323,366,0,517],
[308,308,320,360,0,514],[277,277,315,332,0,519],[185,188,280,289,0,519],[128,188,192,206,0,512],[168,180,201,206,1,517],[182,202,215,218,1,516],[180,194,218,218,0,517],[182,194,198,198,0,527],
[194,197,220,246,1,526],[177,214,235,243,1,520],[217,231,240,269,1,516],[228,242,289,309,1,517],[242,277,283,295,0,515],[237,237,280,289,0,521],[239,239,280,286,1,524],[271,277,289,312,1,523],
[277,285,300,306,1,520],[288,302,303,312,2,523],[265,265,300,318,0,521],[262,271,283,298,1,520],[274,279,346,357,1,506],[336,342,369,377,1,515],[331,339,372,380,0,518],[328,342,355,389,1,516],
[339,348,352,386,0,517],[342,351,400,417,1,514],[365,385,403,412,0,514],[382,382,415,426,1,510],[405,405,417,423,0,520],[379,411,415,417,1,523],[391,411,449,454,1,518],[425,442,446,463,0,521],
[385,385,446,452,0,521],[356,374,389,397,0,520],[342,351,372,377,0,516],[254,265,355,355,0,514],[265,268,312,320,1,516],[291,302,320,326,0,516],[291,299,389,397,1,514],[374,391,429,432,1,522],
[388,414,426,429,0,519],[356,368,417,423,0,519],[334,371,389,403,1,503],[351,356,392,395,0,519],[339,354,380,406,1,500],[336,371,383,389,0,492],[334,354,369,377,0,503],[351,356,400,415,1,507],
[359,402,406,437,1,497],[391,408,446,449,1,513],[391,414,443,452,0,512],[334,371,412,420,0,506],[331,374,395,403,1,513],[394,396,443,452,1,513],[433,439,480,514,1,514],[445,482,483,494,2,513],
[453,456,480,489,0,515],[442,459,463,469,1,512],[396,405,466,466,0,510],[356,408,423,432,1,478],[394,419,472,482,1,482],[462,473,489,498,1,498],[439,445,486,497,0,507],[429,442,472,489,1,509],
[451,465,474,480,0,515],[453,462,474,492,1,508],[453,459,472,489,0,511],[431,456,477,483,1,513],[456,473,497,506,1,519],[448,456,500,512,0,521],[445,453,463,477,0,515],[428,431,452,472,0,520],
[425,428,460,483,1,520],[459,462,483,497,1,522],[428,439,486,489,0,521],[439,442,463,480,1,521],[428,448,466,469,0,523],[414,436,446,446,0,525],[433,433,440,463,1,525],[431,436,440,452,1,522],
[391,391,437,440,0,519],[368,385,395,400,0,522],[362,376,383,392,0,523],[348,359,380,380,0,517],[342,351,357,366,0,518],[345,354,375,380,1,524],[342,365,377,377,0,522],[342,359,363,369,1,523],
[342,359,366,366,0,523],[362,362,395,403,1,523],[391,396,420,423,1,526],[391,394,423,423,0,528],[354,359,397,402,0,523],[319,356,366,366,1,525],[365,371,386,403,1,523],[385,388,403,409,1,525],
[382,385,409,417,0,525],[382,388,417,426,1,525],[368,385,420,423,0,525],[382,382,449,452,1,525],[394,394,452,452,0,522],[388,396,400,403,1,526],[391,396,420,429,1,526],[414,416,426,429,1,529]
];
// Bollinger bands as point lists.
const bands = [
"191,379 200,328 207,286 215,266 223,244 239,218 251,197 263,171 271,141 279,115 284,101",
"323,101 335,130 343,144 351,159 359,158 368,160 385,160 399,164 407,166 415,162 423,152 439,165 447,173 455,175 471,196 488,213 495,220 503,224 511,231 516,240 520,248 527,257 535,252 543,254 551,254 559,270 567,281 575,283 584,283 591,287 608,290 623,287 639,287 647,285 663,289 672,289 681,287 687,284 695,302 703,314 711,331 718,333 728,333 735,331 751,337 759,346 767,352 775,360 783,375 788,379 799,385 808,385 815,390 823,404 831,416 839,418 847,415 863,415 871,413 879,420 887,424 895,410 903,398 911,384 919,372 927,356 936,347 943,339 951,332 959,329 965,328 978,328 985,327 991,323 999,325 1007,325 1015,330 1023,333 1031,335 1039,338 1047,336 1058,336 1065,337 1073,337 1079,339",
"191,494 199,484 208,474 215,467 223,459 239,447 255,431 263,419 271,401 279,385 287,368 295,351 303,330 311,311 319,295 327,279 335,267 343,260 351,254 359,252 368,254 385,254 391,253 399,250 407,249 415,250 423,255 439,271 447,278 455,289 471,308 488,327 495,337 503,344 511,350 519,357 527,360 538,359 551,360 559,366 567,373 575,377 584,377 591,379 608,381 621,378 631,377 639,377 647,379 655,377 663,373 672,374 679,377 687,384 695,395 711,410 721,411 727,410 735,413 743,419 751,422 759,428 775,437 788,444 799,451 808,451 815,453 823,456 831,460 839,462 847,460 855,459 863,458 871,457 879,459 887,459 903,451 911,447 919,441 943,426 959,414 968,410 975,409 983,407 991,403 999,397 1007,393 1015,390 1023,387 1031,386 1039,383 1047,384 1058,384 1071,387 1079,390",
"312,531 319,492 327,445 335,401 343,377 351,347 360,347 368,349 383,348 391,344 399,337 407,331 415,341 423,358 431,368 439,377 447,383 455,399 463,409 471,422 479,431 488,440 495,455 503,468 511,471 519,466 527,464 535,466 551,465 559,463 567,466 575,470 591,471 608,471 615,469 631,467 639,467 647,472 655,466 663,458 671,458 679,467 687,483 695,486 703,489 709,488 727,488 735,495 743,504 751,507 759,509 767,513 775,514 783,509 788,510 799,517 815,517 823,510 831,503 839,506 847,504 855,502 863,502 871,501 879,497 887,495 895,502 903,503 911,509 919,513 927,517 935,514 943,513 951,508 959,498 967,493 975,489 983,486 991,480 999,467 1007,461 1023,441 1031,437 1039,428 1047,431 1057,431 1063,432 1071,437 1079,441"
];
const LEFT = 191, TOP = 102, BASE = 531, STEP = 8;
const prices = [["3.2880",131],["3.2865",174],["3.2850",217],["3.2835",259],["3.2820",302],["3.2805",345],["3.2790",388],["3.2775",431],["3.2760",473],["3.2745",516]];

let volumes = "", bodies = "";
candles.forEach(([high, top, bottom, low, kind, vol], i) => {
  const x = LEFT + i * STEP;
  volumes += `<rect x="${x}" y="${vol}" width="1" height="${BASE - vol}" fill="#008000"/>`;
  bodies += `<rect x="${x}" y="${high}" width="1" height="${low - high}"/>`;
  if (kind === 0) bodies += `<rect x="${x - 1.5}" y="${top + 0.5}" width="4" height="${bottom - top - 1}" fill="#fff" stroke="#000"/>`;
  else bodies += `<rect x="${x - 2}" y="${top}" width="5" height="${bottom - top}"/>`;
});

document.getElementById("plot").innerHTML =
  `<g shape-rendering="crispEdges"><rect y="323" width="100%" height="1" fill="#c0c0c0"/>` +
  `<line x1="0" x2="100%" y1="297.5" y2="297.5" stroke="#007000" stroke-dasharray="9 6 3 6"/>` +
  `<g transform="translate(${-LEFT},${-TOP})">${volumes}${bodies}` +
  bands.map(p => `<polyline points="${p}" transform="translate(.5,.5)" fill="none" stroke="#3cb371"/>`).join("") +
  `<path d="M1091 102h9l-4.500 5z" fill="#b8b8b8"/></g></g><text x="10" y="295">#6728323 sell 1.00</text>`;

document.getElementById("prices").innerHTML =
  prices.map(([label, y]) => `<rect y="${y - 101}" width="3" height="1"/><text x="5" y="${y - 98}">${label}</text>`).join("") +
  `<rect y="318" width="37" height="12"/><text x="5" y="327" fill="#fff">3.2777</text>`;
```
